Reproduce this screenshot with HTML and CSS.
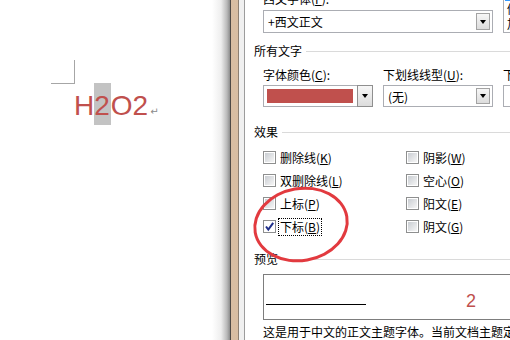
FILE: index.html
```html
<!DOCTYPE html>
<html lang="zh-CN">
<head>
  <meta charset="UTF-8" />
  <title>字体 - 下标</title>
  <link rel="stylesheet" href="styles.css">
</head>
<body>
<div class="screen">
  <div class="doc">
    <div class="corner"></div>
    <p class="formula">H<span class="sel">2</span>O2<span class="para">↵</span></p>
  </div>

  <div class="frame">
    <div class="sash">
      <div class="page">
        <div class="label cut">西文字体(<u>F</u>):</div>
        <div class="toprow">
          <div class="combo wide"><span class="val">+西文正文</span><span class="drop"></span></div>
          <div class="listbox">
            <div class="item picked">常规</div>
            <div class="item">倾斜</div>
            <div class="item">加粗</div>
          </div>
        </div>

        <div class="group first"><span>所有文字</span></div>
        <div class="cols heads">
          <span>字体颜色(<u>C</u>):</span>
          <span>下划线线型(<u>U</u>):</span>
          <span>下划线颜色(<u>I</u>):</span>
        </div>
        <div class="cols">
          <div class="combo"><span class="swatch"></span><span class="drop boxed"></span></div>
          <div class="combo"><span class="val">(无)</span><span class="drop"></span></div>
          <div class="combo"></div>
        </div>

        <div class="group"><span>效果</span></div>
        <div class="effects">
          <label class="check"><span class="box"></span><span>删除线(<u>K</u>)</span></label>
          <label class="check"><span class="box"></span><span>双删除线(<u>L</u>)</span></label>
          <label class="check"><span class="box"></span><span>上标(<u>P</u>)</span></label>
          <label class="check"><span class="box on"><svg width="11" height="11" viewBox="0 0 11 11"><path d="M2 5.5 L4.3 8.6 L9.2 1.8" fill="none" stroke="#1f2f8a" stroke-width="2"/></svg></span><span class="focus">下标(<u>B</u>)</span></label>
          <label class="check"><span class="box"></span><span>阴影(<u>W</u>)</span></label>
          <label class="check"><span class="box"></span><span>空心(<u>O</u>)</span></label>
          <label class="check"><span class="box"></span><span>阳文(<u>E</u>)</span></label>
          <label class="check"><span class="box"></span><span>阴文(<u>G</u>)</span></label>
        </div>

        <div class="group"><span>预览</span></div>
        <div class="preview"><span class="rule"></span><span class="sub">2</span></div>
        <p class="note">这是用于中文的正文主题字体。当前文档主题定义将使用哪种字体。</p>
      </div>
    </div>
  </div>

  <div class="ring"></div>
</div>
</body>
</html>
```

FILE: styles.css
```css
body { margin:0; background:#fff; font-family:"Noto Sans CJK SC", sans-serif; font-size:12px; color:#000;}
.screen { position:relative; display:flex; width:510px; height:340px; overflow:hidden;}

/* document side */
.doc { width:230px; flex:none; background:linear-gradient(to right, #fff 0, #fff 212px, #eeeeee 221px, #b9b9b9 227px, #8c8c8c 230px);}
.corner { box-sizing:border-box; width:24px; height:24px; margin:60px 0 0 51px; border-right:1px solid #a6a6a6; border-bottom:1px solid #a6a6a6;}
.formula { margin:6px 0 0 74px; font-family:"Liberation Sans", sans-serif; font-size:28px; line-height:32px; color:#c0504d; white-space:nowrap;}
.sel { background:#c3c3c3; padding:7px 1px 4px 0;}
.para { font-family:"DejaVu Sans", sans-serif; font-size:10px; color:#8a8a8a; margin-left:2px;}

/* dialog frame */
.frame { flex:1; display:flex; border-left:1px solid #4e4945; background:linear-gradient(to right, #d8bda2, #e6d0bb); padding-left:7px;}
.sash { flex:1; display:flex; border-left:1px solid #8d7f72; background:#f0f0f0; padding-left:5px;}
.page { flex:1; border-left:1px solid #9c9c9c; background:#fff; min-width:0;}

.label { line-height:12px; margin-left:18px; white-space:nowrap;}
.cut { margin-top:-7px;}
.toprow { display:flex; align-items:flex-start; gap:10px; margin:5px 0 0 18px;}

.combo { box-sizing:border-box; display:flex; align-items:center; width:110px; height:22px; border:1px solid #abadb3; background:#fff; flex:none;}
.combo.wide { width:230px; height:23px;}
.val { padding-left:4px; white-space:nowrap;}
.drop { display:flex; align-items:center; justify-content:center; box-sizing:border-box; width:14px; align-self:stretch; margin:2px 2px 2px auto; border:1px solid #a3a3a3; background:linear-gradient(#f7f7f7, #dcdcdc);}
.drop::after { content:""; border-top:4px solid #000; border-left:3px solid transparent; border-right:3px solid transparent;}
.drop.boxed { width:16px; margin:-1px -1px -1px auto; border-color:#8f8f8f;}
.swatch { width:86px; height:14px; margin-left:3px; background:#c0504d;}

.listbox { box-sizing:border-box; width:70px; height:49px; margin-top:-26px; border:1px solid #abadb3; padding:1px; flex:none;}
.item { height:15px; line-height:15px; padding-left:2px; white-space:nowrap;}
.item.picked { background:#3399ff; color:#fff;}

.group { display:flex; align-items:center; gap:4px; height:16px; line-height:16px; padding-left:9px; white-space:nowrap;}
.group::after { content:""; flex:1; border-top:1px solid #dadada;}
.group.first { margin-top:10px;}

.cols { display:grid; grid-template-columns:110px 110px 110px; column-gap:10px; margin-left:18px; white-space:nowrap;}
.heads { line-height:16px; margin-top:8px;}
.heads + .cols { margin-top:2px;}
.cols + .group { margin-top:17px;}

.effects { display:grid; grid-template-columns:143px 1fr; grid-template-rows:repeat(4, 23px); grid-auto-flow:column; margin:6px 0 0 18px;}
.check { display:flex; align-items:center; gap:4px; white-space:nowrap;}
.box { box-sizing:border-box; width:13px; height:13px; border:1px solid #8e8f8f; padding:1px; background:linear-gradient(135deg, #c9cdd2, #f6f6f6) content-box, #fff; flex:none;}
.box.on { background:#fff; padding:0; display:flex; align-items:center; justify-content:center;}
.focus { border:1px dotted #000; padding:0 1px; margin-left:-2px; line-height:16px;}
.effects + .group { margin-top:13px;}

.preview { box-sizing:border-box; display:flex; align-items:flex-start; width:300px; height:46px; margin:7px 0 0 18px; border:1px solid #7d7d7d; padding-left:2px;}
.rule { width:100px; height:1px; margin-top:29px; background:#000; flex:none;}
.sub { margin:17px 0 0 100px; font-family:"Liberation Sans", sans-serif; font-size:18px; line-height:18px; color:#c0504d;}
.note { margin:4px 0 0 18px; line-height:16px; white-space:nowrap;}

/* annotation drawn over the dialog */
.ring { position:absolute; left:253px; top:187px; box-sizing:border-box; width:96px; height:75px; border:3px solid #e23a3f; border-radius:50%; transform:rotate(-10deg);}
```
